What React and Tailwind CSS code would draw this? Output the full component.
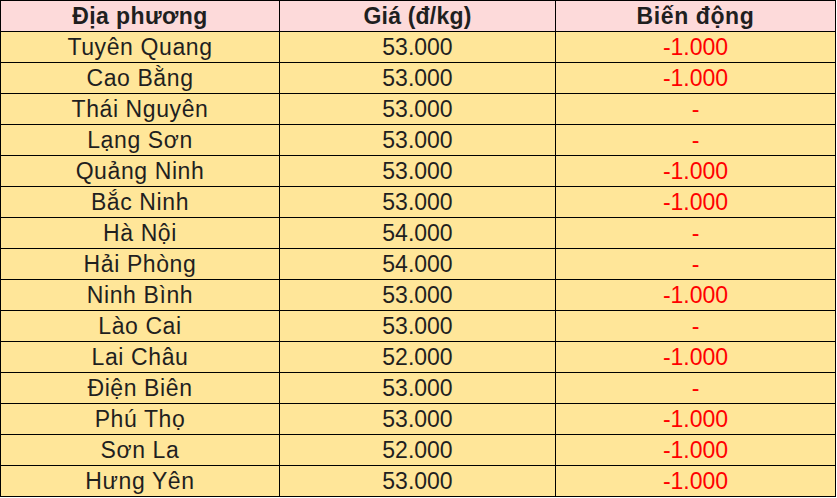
import React from 'react';

const rows = [
  ['Tuyên Quang', '53.000', '-1.000'],
  ['Cao Bằng', '53.000', '-1.000'],
  ['Thái Nguyên', '53.000', '-'],
  ['Lạng Sơn', '53.000', '-'],
  ['Quảng Ninh', '53.000', '-1.000'],
  ['Bắc Ninh', '53.000', '-1.000'],
  ['Hà Nội', '54.000', '-'],
  ['Hải Phòng', '54.000', '-'],
  ['Ninh Bình', '53.000', '-1.000'],
  ['Lào Cai', '53.000', '-'],
  ['Lai Châu', '52.000', '-1.000'],
  ['Điện Biên', '53.000', '-'],
  ['Phú Thọ', '53.000', '-1.000'],
  ['Sơn La', '52.000', '-1.000'],
  ['Hưng Yên', '53.000', '-1.000'],
];

const App = () => {
  return (
    <div className="min-h-screen bg-white" style={{ fontFamily: '"Liberation Sans", Arial, sans-serif' }}>
      <table className="w-[836px] border-collapse text-[23px] text-[#1f1f1f] leading-none">
        <thead>
          <tr className="bg-[#fddada]">
            <th className="w-[279px] h-[31px] p-0 border border-black font-bold tracking-[0.4px]">Địa phương</th>
            <th className="w-[276px] h-[31px] p-0 border border-black font-bold tracking-[0.2px]">Giá (đ/kg)</th>
            <th className="h-[31px] p-0 border border-black font-bold tracking-[0.6px]">Biến động</th>
          </tr>
        </thead>
        <tbody>
          {rows.map(([place, price, change]) => (
            <tr key={place} className="bg-[#ffe699]">
              <td className="h-[31px] p-0 border border-black text-center tracking-[0.6px]">{place}</td>
              <td className="h-[31px] p-0 border border-black text-center">{price}</td>
              <td className="h-[31px] p-0 border border-black text-center text-[#ff0000]">{change}</td>
            </tr>
          ))}
        </tbody>
      </table>
    </div>
  );
};

export default App;
